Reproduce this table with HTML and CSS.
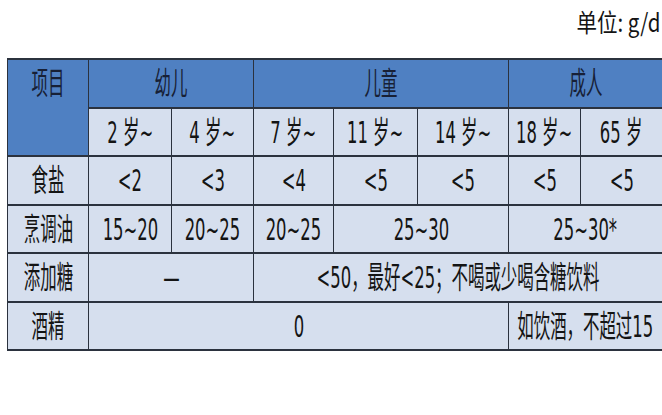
FILE: index.html
```html
<!DOCTYPE html>
<html lang="zh-CN">
<head>
<meta charset="utf-8">
<title>推荐摄入量</title>
<link rel="stylesheet" href="styles.css">
</head>
<body>
<div class="page">
  <div class="unit"><span class="unit-t">单位: g/d</span></div>
  <div class="grid">
    <div class="cell head item"><span class="t">项目</span></div>
    <div class="cell head span2"><span class="t">幼儿</span></div>
    <div class="cell head span3"><span class="t">儿童</span></div>
    <div class="cell head span2"><span class="t">成人</span></div>

    <div class="cell"><span class="t">2 岁~</span></div>
    <div class="cell"><span class="t">4 岁~</span></div>
    <div class="cell"><span class="t">7 岁~</span></div>
    <div class="cell"><span class="t">11 岁~</span></div>
    <div class="cell"><span class="t">14 岁~</span></div>
    <div class="cell"><span class="t">18 岁~</span></div>
    <div class="cell"><span class="t">65 岁</span></div>

    <div class="cell"><span class="t">食盐</span></div>
    <div class="cell"><span class="t">&lt;2</span></div>
    <div class="cell"><span class="t">&lt;3</span></div>
    <div class="cell"><span class="t">&lt;4</span></div>
    <div class="cell"><span class="t">&lt;5</span></div>
    <div class="cell"><span class="t">&lt;5</span></div>
    <div class="cell"><span class="t">&lt;5</span></div>
    <div class="cell"><span class="t">&lt;5</span></div>

    <div class="cell"><span class="t">烹调油</span></div>
    <div class="cell"><span class="t">15~20</span></div>
    <div class="cell"><span class="t">20~25</span></div>
    <div class="cell"><span class="t">20~25</span></div>
    <div class="cell span2"><span class="t">25~30</span></div>
    <div class="cell span2"><span class="t">25~30*</span></div>

    <div class="cell"><span class="t">添加糖</span></div>
    <div class="cell span2"><span class="t">—</span></div>
    <div class="cell span5"><span class="t">&lt;50，最好&lt;25；不喝或少喝含糖饮料</span></div>

    <div class="cell"><span class="t">酒精</span></div>
    <div class="cell span5"><span class="t">0</span></div>
    <div class="cell span2"><span class="t">如饮酒，不超过15</span></div>
  </div>
</div>
</body>
</html>
```
FILE: styles.css
```css
html, body {
  margin: 0;
  padding: 0;
  background: #ffffff;
  overflow: hidden;
}

.page {
  width: 662px;
  height: 415px;
  font-family: "DejaVu Sans", "Noto Sans CJK SC", sans-serif;
  color: #141414;
}

.unit {
  height: 58px;
  display: flex;
  justify-content: flex-end;
  align-items: flex-start;
  padding-right: 2px;
  box-sizing: border-box;
}

.unit-t {
  display: inline-block;
  font-family: "Noto Sans CJK SC", sans-serif;
  font-size: 25px;
  line-height: 42px;
  white-space: nowrap;
  transform: scaleX(0.82);
  transform-origin: right center;
}

.grid {
  margin-left: 7px;
  display: grid;
  grid-template-columns: 80px 82px 81px 79px 83px 90px 71px 81px;
  grid-template-rows: 47px 46px 47px 46px 47px 46px;
  column-gap: 1px;
  row-gap: 2px;
  padding: 2px 0 2px 1px;
  background: #2b323e;
  width: 655px;
  box-sizing: border-box;
}

.cell {
  background: #d6dfee;
  display: flex;
  justify-content: center;
  align-items: center;
  min-width: 0;
}

.head {
  background: #4f80c2;
  color: #172036;
}

.item {
  grid-row: span 2;
  align-items: flex-start;
}

.item .t {
  line-height: 47px;
}

.span2 { grid-column: span 2; }
.span3 { grid-column: span 3; }
.span5 { grid-column: span 5; }

.t {
  display: inline-block;
  font-size: 31px;
  line-height: 1;
  white-space: nowrap;
  transform: scaleX(0.53);
  transform-origin: center center;
  flex-shrink: 0;
}
```
